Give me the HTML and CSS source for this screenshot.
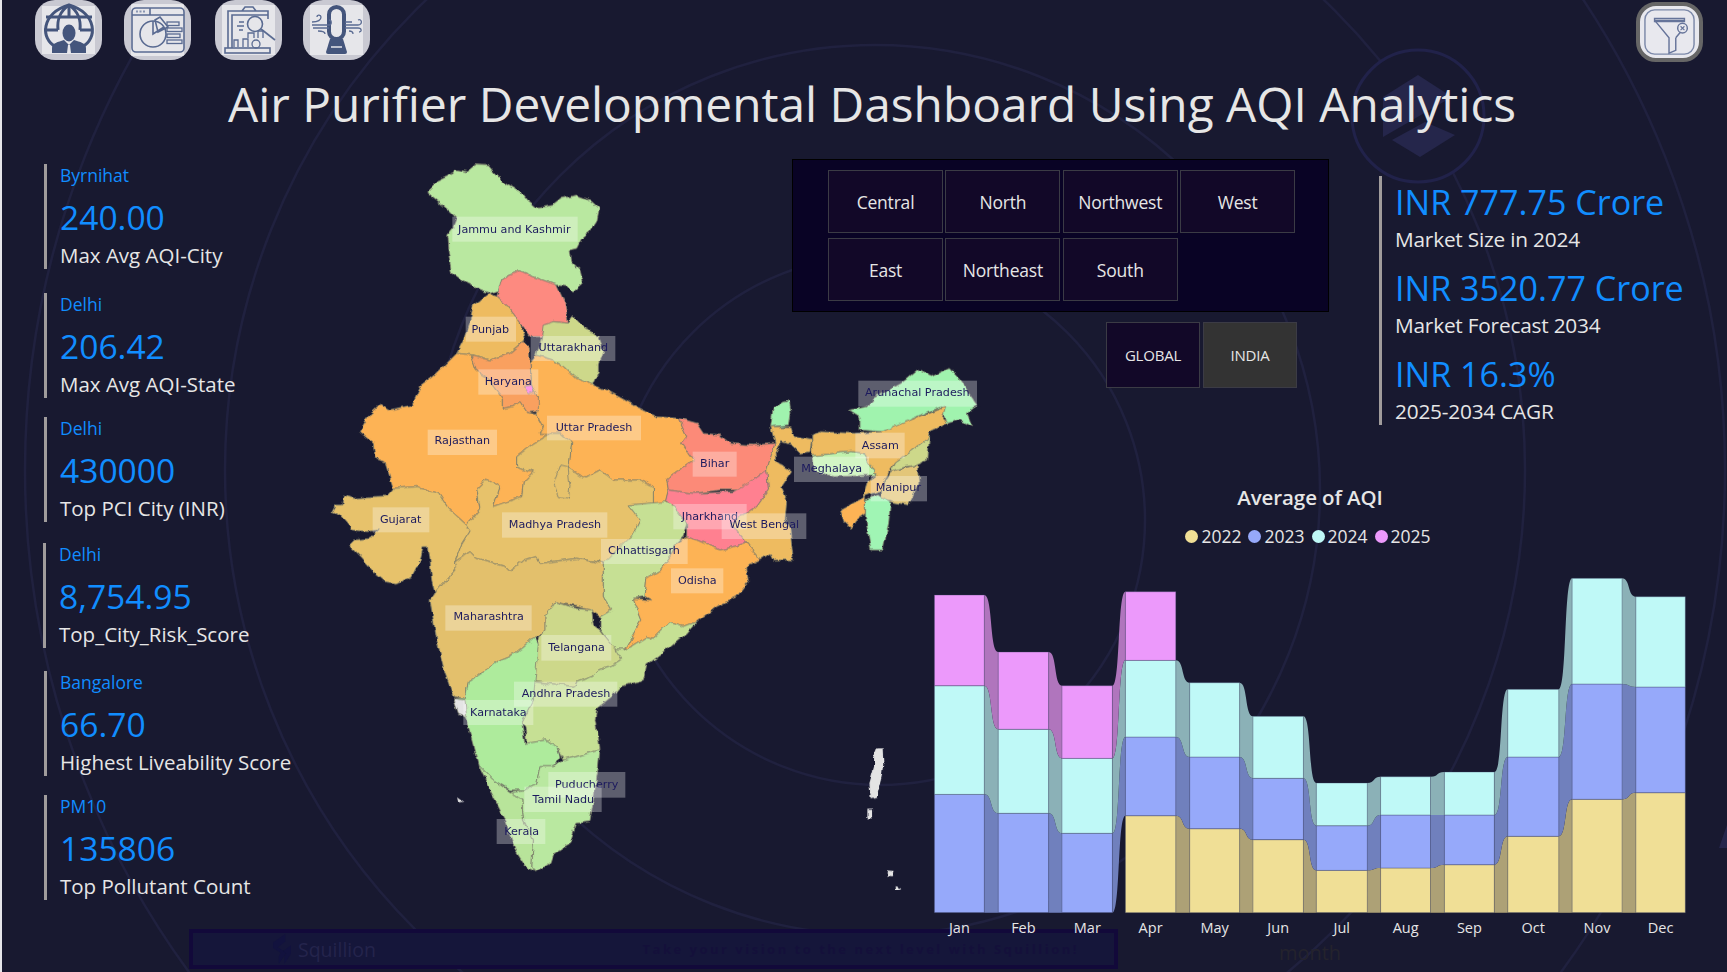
FILE: index.html
```html
<!DOCTYPE html>
<html lang="en">
<head>
<meta charset="utf-8">
<title>Air Purifier Developmental Dashboard</title>
<link rel="stylesheet" href="styles.css">
</head>
<body>
<div class="page">
  <svg class="bg" viewBox="0 0 1727 972" aria-hidden="true">
    <circle class="ring" cx="880" cy="520" r="265"/>
    <circle class="ring" cx="875" cy="490" r="445"/>
    <circle class="ring" cx="875" cy="470" r="650"/>
    <circle class="ring" cx="875" cy="470" r="850"/>
    <circle class="wm-back" cx="1418" cy="116" r="66"/>
    <polygon class="wm" points="1418,75 1452,97 1383,137 1383,97"/>
    <polygon class="wm" points="1392,140 1425,122 1455,135 1420,157"/>
    <polygon class="wm" points="1719,848 1727,825 1727,848"/>
  </svg>

  <footer class="banner">
    <svg class="b-logo" viewBox="0 0 20 32"><path d="M13 0v8L5 14l9 6-8 12v-8l2-4-8-5V9z"/><path d="M19 12v9l-7 11v-8l2-3-3-3z"/></svg>
    <span class="b-name">Squillion</span>
    <span class="b-tag">Take your vision to the next level with Squillion!</span>
  </footer>

  <header class="topbar">
    <nav class="nav">
      <a class="tile">
        <svg viewBox="0 0 67 60"><rect class="i-in" x="7" y="6" width="53" height="48"/>
          <g class="i-s"><path d="M21 47C5 39 6 13 34 5c28 8 29 34 13 42"/><path d="M34 5C24 12 22 20 23 30M34 5c10 7 12 15 11 25"/><path d="M11 17h46M9 30h14M45 30h13M34 5v12"/></g>
          <ellipse class="i-f" cx="34" cy="33" rx="6.5" ry="8.5"/><path class="i-f" d="M17 53v-5c0-5 6-6 12-8l5 5 5-5c6 2 12 3 12 8v5z"/><path class="i-w" d="M33 45h2l1 8h-4z"/></svg>
      </a>
      <a class="tile tile-2">
        <svg viewBox="0 0 67 60"><rect class="i-in" x="7" y="4" width="53" height="52"/>
          <g class="i-s2"><rect x="8" y="8" width="52" height="44" rx="4"/><path d="M8 15h52M26 8v7"/><circle cx="29" cy="34" r="13"/><path d="M29 21v13l11-7M31 20l5-3 8 10-10 5z"/></g>
          <g class="i-s3"><rect x="43" y="22" width="12" height="3.5"/><rect x="43" y="28" width="15" height="3.5"/><rect x="43" y="34" width="13" height="3.5"/><rect x="43" y="40" width="15" height="3.5"/></g>
          <path class="i-d" d="M12 11.5h9"/></svg>
      </a>
      <a class="tile tile-3">
        <svg viewBox="0 0 67 60"><rect class="i-in" x="7" y="5" width="53" height="50"/>
          <g class="i-s2"><path d="M13 48V11h40v8M17 48V15h36M27 11l3-4h8l3 4"/><rect x="10" y="48" width="45" height="5"/><circle cx="40" cy="24" r="7.5"/><path d="M46 29l14 11"/></g>
          <g class="i-s3"><path d="M24 22h5M22 26h7M24 30h4M33 38v-5h6v5M43 38v-7h5v7M28 47v-8h5v8M19 47v-7h4v7"/><circle cx="41" cy="44" r="4"/></g></svg>
      </a>
      <a class="tile tile-4">
        <svg viewBox="0 0 67 60"><rect class="i-in" x="7" y="5" width="53" height="50"/>
          <rect class="i-thick" x="26" y="7" width="15" height="32" rx="7.5"/>
          <path class="i-f" d="M27 39h13l4 13q0 2-2 2H25q-2 0-2-2z"/><path class="i-w2" d="M28 47h11"/>
          <g class="i-s3"><path d="M9 25h17c3 0 3-5 0-5M9 22c6 0 9-2 9-5 0-2-4-3-4 0M10 28h16M15 31c4 0 7 1 7 3"/><path d="M42 25h13c5 0 4-7 0-5M42 22h7M42 28h13c4 0 4 4 1 4M46 31c3 0 4 1 4 3"/></g></svg>
      </a>
    </nav>
    <a class="tile filter">
      <svg viewBox="0 0 61 54"><rect class="f-in" x="5" y="4" width="51" height="46" rx="10"/>
        <g class="f-s"><path d="M15 15h31M16 16l14 17v16l7-3V33"/><path d="M15 13h31v3H15zM37 33l5-6"/><circle cx="44" cy="23" r="5"/><path class="f-x" d="M42 21l4 4m0-4l-4 4"/></g></svg>
    </a>
  </header>

  <h1 class="title">Air Purifier Developmental Dashboard Using AQI Analytics</h1>

  <main class="main">
    <section class="kpis">
      <article class="kpi"><div class="kpi-label">Byrnihat</div><div class="kpi-value">240.00</div><div class="kpi-cap">Max Avg AQI-City</div></article>
      <article class="kpi"><div class="kpi-label">Delhi</div><div class="kpi-value">206.42</div><div class="kpi-cap">Max Avg AQI-State</div></article>
      <article class="kpi"><div class="kpi-label">Delhi</div><div class="kpi-value">430000</div><div class="kpi-cap">Top PCI City (INR)</div></article>
      <article class="kpi kpi-shift"><div class="kpi-label">Delhi</div><div class="kpi-value">8,754.95</div><div class="kpi-cap">Top_City_Risk_Score</div></article>
      <article class="kpi"><div class="kpi-label">Bangalore</div><div class="kpi-value">66.70</div><div class="kpi-cap">Highest Liveability Score</div></article>
      <article class="kpi"><div class="kpi-label">PM10</div><div class="kpi-value">135806</div><div class="kpi-cap">Top Pollutant Count</div></article>
    </section>

    <div class="right">
      <div class="top-row">
        <div class="slicers">
          <div class="regions">
            <button class="btn">Central</button><button class="btn">North</button><button class="btn">Northwest</button><button class="btn">West</button>
            <button class="btn">East</button><button class="btn">Northeast</button><button class="btn">South</button>
          </div>
          <div class="toggle">
            <button class="btn btn-sm">GLOBAL</button><button class="btn btn-sm btn-on">INDIA</button>
          </div>
        </div>
        <section class="market">
          <div class="m-value">INR 777.75 Crore</div><div class="m-cap">Market Size in 2024</div>
          <div class="m-value">INR 3520.77 Crore</div><div class="m-cap">Market Forecast 2034</div>
          <div class="m-value">INR 16.3%</div><div class="m-cap">2025-2034 CAGR</div>
        </section>
      </div>

      <figure class="chart">
        <figcaption class="chart-title">Average of AQI</figcaption>
        <ul class="legend">
          <li><i class="dot d22"></i>2022</li><li><i class="dot d23"></i>2023</li><li><i class="dot d24"></i>2024</li><li><i class="dot d25"></i>2025</li>
        </ul>
        <svg id="aqi-chart" class="plot" width="770" height="421" viewBox="0 0 770 421"></svg>
      </figure>
    </div>
  </main>

  <svg class="map" viewBox="0 0 2010 2220" role="img" aria-label="Map of India by state">
    <defs>
      <filter id="rough" filterUnits="userSpaceOnUse" x="0" y="0" width="2010" height="2220" color-interpolation-filters="sRGB">
        <feTurbulence type="fractalNoise" baseFrequency="0.035" numOctaves="3" seed="4" result="n"/>
        <feDisplacementMap in="SourceGraphic" in2="n" scale="16" xChannelSelector="R" yChannelSelector="G"/>
        <feGaussianBlur stdDeviation="1.2"/>
      </filter>
    </defs>
    <g class="states" filter="url(#rough)">
      <path class="c-green" d="M320,125 L350,95 L400,70 L405,58 L440,65 L465,45 L505,47 L525,70 L555,100 L605,130 L620,150 L650,175 L700,165 L725,145 L770,135 L810,150 L838,175 L830,215 L810,245 L785,265 L770,295 L750,300 L755,335 L780,360 L790,400 L760,425 L745,410 L710,405 L640,380 L600,362 L545,385 L540,420 L510,430 L470,415 L430,395 L395,370 L385,310 L380,255 L400,230 L410,205 L385,180 L350,150 Z"/>
      <path class="c-amber" d="M510,430 L530,440 L565,470 L600,520 L615,570 L570,610 L510,630 L460,615 L410,610 L430,570 L450,510 L460,465 Z"/>
      <path class="c-orange" d="M410,610 L340,680 L300,710 L275,765 L205,780 L180,762 L150,790 L118,845 L160,880 L165,925 L195,935 L220,1015 L290,1010 L355,1030 L385,1075 L440,1125 L480,1075 L470,1015 L500,985 L540,1010 L520,1070 L605,1040 L610,995 L640,965 L590,950 L590,920 L640,880 L690,850 L660,850 L670,835 L645,790 L620,785 L600,755 L575,770 L550,775 L550,745 L515,700 L465,660 L455,630 L460,615 Z"/>
      <path class="c-orange" d="M650,615 L700,630 L730,650 L770,685 L820,705 L860,720 L950,770 L1010,800 L1075,805 L1100,860 L1085,880 L1120,930 L1040,985 L1045,1020 L1035,1060 L1000,1060 L1000,1010 L960,990 L880,990 L840,960 L790,985 L740,950 L720,945 L700,1000 L715,1040 L745,1045 L750,1010 L745,960 L755,880 L720,850 L690,850 L660,850 L670,835 L645,790 L655,740 L635,710 L630,640 Z"/>
      <path class="c-sand" d="M440,1125 L480,1075 L470,1015 L500,985 L540,1010 L520,1070 L605,1040 L610,995 L640,965 L590,950 L590,920 L640,880 L690,850 L720,850 L755,880 L745,960 L750,1010 L745,1045 L715,1040 L700,1000 L720,945 L740,950 L790,985 L840,960 L880,990 L960,990 L1000,1010 L1000,1060 L925,1065 L960,1110 L940,1150 L860,1240 L770,1225 L660,1240 L650,1220 L610,1230 L570,1265 L550,1245 L470,1225 L450,1205 L405,1235 L425,1180 L450,1140 Z"/>
      <path class="c-sand" d="M70,1035 L100,1045 L150,1040 L200,1038 L220,1015 L290,1010 L355,1030 L385,1075 L440,1125 L450,1140 L425,1180 L405,1235 L410,1250 L390,1275 L370,1300 L345,1330 L335,1290 L330,1230 L325,1190 L310,1190 L300,1230 L275,1280 L230,1300 L195,1295 L160,1265 L125,1225 L85,1185 L100,1170 L150,1165 L175,1140 L140,1145 L100,1140 L60,1095 L35,1085 L45,1065 L65,1065 Z"/>
      <path class="c-sand2" d="M345,1330 L370,1300 L390,1275 L410,1250 L405,1235 L450,1205 L470,1225 L550,1245 L570,1265 L610,1230 L650,1220 L660,1240 L770,1225 L850,1240 L850,1340 L875,1380 L840,1400 L810,1380 L770,1370 L705,1355 L675,1395 L675,1440 L655,1460 L645,1460 L585,1510 L535,1530 L500,1560 L445,1595 L435,1645 L400,1640 L375,1570 L350,1470 L330,1350 Z"/>
      <path class="c-red" d="M545,385 L600,362 L640,380 L710,405 L735,460 L745,520 L700,515 L670,540 L665,560 L630,560 L600,520 L565,470 L530,440 Z"/>
      <path class="c-olive" d="M665,560 L670,525 L700,515 L745,520 L760,500 L790,530 L835,560 L850,600 L835,640 L835,670 L820,705 L770,685 L730,650 L700,630 L650,615 Z"/>
      <path class="c-dorange" d="M460,615 L510,630 L570,610 L612,575 L628,590 L630,640 L635,710 L655,740 L655,780 L620,785 L600,755 L575,770 L550,775 L550,745 L515,700 L465,660 L455,630 Z"/>
      <path class="c-pink" d="M610,710 L635,705 L642,725 L625,732 Z"/>
      <path class="c-salmon" d="M1075,805 L1130,820 L1150,850 L1200,855 L1230,880 L1300,885 L1365,880 L1340,960 L1300,990 L1280,1020 L1200,1020 L1120,1030 L1045,1020 L1040,985 L1120,930 L1085,880 L1100,860 Z"/>
      <path class="c-amber" d="M1352,830 L1410,830 L1420,860 L1475,870 L1470,905 L1440,910 L1415,885 L1385,875 L1368,905 L1370,935 L1415,965 L1385,1010 L1400,1050 L1395,1110 L1410,1140 L1420,1230 L1360,1230 L1350,1210 L1320,1230 L1280,1180 L1230,1120 L1280,1090 L1310,1070 L1345,1020 L1340,960 L1365,880 Z"/>
      <path class="c-rose" d="M1045,1020 L1120,1030 L1240,1025 L1300,990 L1340,960 L1345,1020 L1310,1070 L1280,1090 L1230,1120 L1280,1180 L1200,1200 L1130,1170 L1100,1160 L1100,1120 L1060,1070 L1035,1060 Z"/>
      <path class="c-mint" d="M1360,770 L1405,755 L1410,790 L1405,825 L1352,830 Z"/>
      <g transform="translate(300,1050)">
        <path class="c-lime" d="M625,15 L740,5 L760,20 L800,70 L790,110 L770,130 L750,170 L720,210 L680,235 L675,290 L640,295 L665,360 L615,450 L585,450 L540,385 L540,350 L575,330 L550,290 L550,190 L640,100 L660,60 Z"/>
        <path class="c-orange" d="M800,110 L830,120 L900,150 L980,130 L1020,180 L980,200 L985,245 L950,290 L890,320 L830,365 L790,380 L750,365 L700,415 L680,410 L615,450 L665,360 L640,295 L695,300 L675,290 L680,235 L720,210 L750,170 L770,130 Z"/>
        <path class="c-olive" d="M405,305 L470,325 L515,330 L520,375 L540,390 L585,445 L605,480 L590,490 L535,510 L520,525 L470,545 L465,560 L340,545 L345,480 L355,415 L375,390 L375,345 Z"/>
        <path class="c-lime" d="M585,450 L615,450 L680,410 L700,415 L750,365 L790,380 L830,365 L800,400 L740,450 L680,495 L670,540 L600,560 L575,590 L530,625 L525,660 L535,710 L540,750 L500,760 L430,780 L410,740 L380,720 L320,730 L315,680 L305,670 L340,600 L340,545 L465,560 L470,545 L520,525 L535,510 L590,490 L605,480 Z"/>
        <path class="c-kar" d="M345,410 L355,430 L345,545 L340,600 L305,670 L315,730 L380,720 L410,740 L420,770 L400,800 L360,800 L350,850 L310,870 L270,870 L220,840 L175,795 L150,700 L135,650 L100,595 L135,595 L145,545 L200,510 L235,480 L285,460 Z"/>
        <path class="c-green" d="M540,750 L535,800 L510,965 L470,970 L450,1030 L400,1060 L390,1090 L350,1115 L335,1100 L340,1020 L310,960 L305,900 L270,875 L310,870 L350,850 L360,800 L400,800 L430,780 L500,760 Z"/>
        <path class="c-green2" d="M175,795 L220,840 L270,875 L305,900 L310,960 L340,1020 L335,1100 L350,1115 L320,1105 L285,1050 L250,950 L210,870 Z"/>
        <path class="c-goa" d="M100,595 L135,600 L140,650 L115,640 Z"/>
        <path class="c-isl" d="M1372,745 L1388,745 L1390,790 L1385,830 L1370,890 L1352,895 L1348,850 L1362,800 L1362,770 Z"/>
        <path class="c-isl" d="M1342,926 L1356,926 L1356,952 L1342,952 Z"/>
        <path class="c-isl" d="M114,892 L130,904 L118,908 Z"/>
        <path class="c-isl" d="M1404,1108 L1424,1110 L1418,1132 L1402,1130 Z"/>
        <path class="c-isl" d="M1424,1158 L1442,1165 L1445,1200 L1425,1195 Z"/>
      </g>
      <g transform="translate(1320,0) scale(1.0714,1)">
        <path class="c-mint" d="M250,780 L300,770 L320,745 L395,700 L440,660 L480,680 L530,655 L560,690 L610,765 L580,790 L595,830 L560,810 L520,820 L510,770 L470,785 L420,810 L390,830 L345,845 L280,840 L280,800 Z"/>
        <path class="c-amber" d="M145,855 L170,845 L270,850 L345,845 L420,810 L520,768 L510,805 L525,820 L475,845 L470,865 L420,905 L380,935 L360,965 L340,1020 L290,1040 L305,990 L325,975 L290,910 L255,905 L145,918 Z"/>
        <path class="c-meg" d="M145,918 L255,905 L290,910 L325,975 L205,980 L150,960 Z"/>
        <path class="c-olive" d="M475,845 L470,930 L440,945 L410,950 L365,965 L380,935 L420,905 L470,865 Z"/>
        <path class="c-man" d="M365,965 L440,945 L445,1000 L415,1065 L340,1050 L340,1020 Z"/>
        <path class="c-miz" d="M295,1050 L330,1035 L365,1060 L360,1120 L345,1200 L310,1200 L295,1100 Z"/>
        <path class="c-orange" d="M225,1080 L295,1040 L295,1090 L270,1110 L255,1135 L235,1115 Z"/>
      </g>
    </g>
    <g class="labels">
      <rect x="397" y="200" width="376" height="75"/><text x="583" y="248">Jammu and Kashmir</text>
      <rect x="437" y="500" width="151" height="75"/><text x="511" y="548">Punjab</text>
      <rect x="632" y="558" width="254" height="75"/><text x="760" y="603">Uttarakhand</text>
      <rect x="475" y="658" width="180" height="76"/><text x="565" y="705">Haryana</text>
      <rect x="681" y="797" width="282" height="74"/><text x="822" y="843">Uttar Pradesh</text>
      <rect x="323" y="839" width="208" height="76"/><text x="427" y="883">Rajasthan</text>
      <rect x="1118" y="905" width="132" height="75"/><text x="1184" y="951">Bihar</text>
      <rect x="158" y="1072" width="170" height="75"/><text x="242" y="1118">Gujarat</text>
      <rect x="546" y="1087" width="316" height="76"/><text x="705" y="1135">Madhya Pradesh</text>
      <rect x="1060" y="1062" width="220" height="76"/><text x="1170" y="1110">Jharkhand</text>
      <rect x="1205" y="1090" width="254" height="77"/><text x="1333" y="1135">West Bengal</text>
      <rect x="843" y="1167" width="260" height="75"/><text x="972" y="1213">Chhattisgarh</text>
      <rect x="1053" y="1255" width="157" height="75"/><text x="1132" y="1301">Odisha</text>
      <rect x="376" y="1366" width="259" height="76"/><text x="506" y="1411">Maharashtra</text>
      <rect x="664" y="1455" width="210" height="77"/><text x="770" y="1504">Telangana</text>
      <rect x="582" y="1595" width="310" height="75"/><text x="738" y="1641">Andhra Pradesh</text>
      <rect x="430" y="1650" width="210" height="75"/><text x="535" y="1698">Karnataka</text>
      <rect x="685" y="1866" width="231" height="77"/><text x="800" y="1913">Puducherry</text>
      <rect x="613" y="1910" width="232" height="76"/><text x="730" y="1958">Tamil Nadu</text>
      <rect x="530" y="2007" width="146" height="75"/><text x="605" y="2055">Kerala</text>
      <rect x="1615" y="692" width="356" height="78"/><text x="1792" y="738">Arunachal Pradesh</text>
      <rect x="1606" y="848" width="148" height="77"/><text x="1681" y="896">Assam</text>
      <rect x="1422" y="920" width="225" height="76"/><text x="1535" y="966">Meghalaya</text>
      <rect x="1652" y="978" width="169" height="76"/><text x="1735" y="1023">Manipur</text>
    </g>
  </svg>
</div>
<script src="chart.js"></script>
</body>
</html>
```
FILE: styles.css
```css
* { box-sizing: border-box; }
html, body { margin: 0; padding: 0; background: #181930; }
body { font-family: "Open Sans", "Noto Sans", sans-serif; }

.page {
  position: relative;
  width: 1727px;
  height: 972px;
  overflow: hidden;
  background: #181930;
  border-left: 2px solid #e6e6ea;
  color: #e6e6e6;
}

.bg { position: absolute; left: -2px; top: 0; width: 1727px; height: 972px; }
.ring { fill: none; stroke: #20213f; stroke-width: 2.5; }
.wm-back { fill: #181930; stroke: #21224a; stroke-width: 3; }
.wm { fill: #25264b; }

/* top bar */
.topbar {
  position: relative;
  display: flex;
  justify-content: space-between;
  align-items: flex-start;
  height: 62px;
  padding: 0 24px 0 33px;
}
.nav { display: flex; gap: 22px; }
.tile {
  display: block;
  width: 67px;
  height: 60px;
  border-radius: 20px;
  background: #c9c9d2;
  overflow: hidden;
}
.tile svg { display: block; width: 100%; height: 100%; }
.tile-3 { margin-left: 2px; }
.tile-4 { margin-left: -1px; }
.i-in { fill: #e6e6ea; }
.i-s { fill: none; stroke: #44557c; stroke-width: 3; }
.i-s2 { fill: none; stroke: #5a6b92; stroke-width: 1.6; }
.i-s3 { fill: none; stroke: #5a6b92; stroke-width: 1.3; }
.i-f { fill: #44557c; }
.i-w { fill: #e6e6ea; }
.i-w2 { stroke: #e6e6ea; stroke-width: 1.5; }
.i-d { stroke: #8a96b2; stroke-width: 2; stroke-dasharray: 2 1.5; }
.i-thick { fill: none; stroke: #44557c; stroke-width: 4; }

.filter {
  width: 67px;
  height: 60px;
  margin-top: 2px;
  border: 4px solid #666;
  background: #e8e8ee;
}
.f-in { fill: #e8e8ee; stroke: #7b88a8; stroke-width: 1.5; }
.f-s { fill: none; stroke: #66749a; stroke-width: 1.5; }
.f-x { stroke-width: 1.2; }

/* title */
.title {
  position: relative;
  margin: -2px 0 2px;
  height: 88px;
  padding-left: 15px;
  font-size: 47.8px;
  font-weight: 400;
  line-height: 88px;
  text-align: center;
  white-space: nowrap;
  color: #e6e6e6;
}

/* layout */
.main { position: relative; display: flex; }
.kpis {
  display: flex;
  flex-direction: column;
  width: 790px;
  padding: 14px 0 0 42px;
}
.kpi {
  height: 105px;
  padding-left: 13px;
  border-left: 3px solid #a09c9c;
  white-space: nowrap;
}
.kpi:nth-child(2) { margin-top: 24px; }
.kpi:nth-child(3) { margin-top: 19px; }
.kpi:nth-child(4) { margin-top: 21px; }
.kpi:nth-child(5) { margin-top: 23px; }
.kpi:nth-child(6) { margin-top: 19px; }
.kpi-shift { margin-left: -1px; }
.kpi-label { font-size: 17.5px; line-height: 23px; color: #118dff; }
.kpi-value { margin-top: 7px; font-size: 33.6px; line-height: 46px; color: #118dff; }
.kpi-cap { margin-top: 2px; font-size: 20.5px; line-height: 26px; color: #e6e6e6; }

.right { flex: 1; min-width: 0; }
.top-row { display: flex; height: 275px; }
.slicers { width: 587px; padding-top: 9px; }
.regions {
  display: grid;
  grid-template-columns: repeat(4, 115px);
  grid-auto-rows: 63px;
  column-gap: 2.4px;
  row-gap: 5px;
  width: 537px;
  height: 153px;
  padding: 10px 0 0 35px;
  background: #090325;
  border: 1px solid #000;
}
.btn {
  font: 400 17.5px "Open Sans", "Noto Sans", sans-serif;
  color: #e6e6e6;
  background: #120828;
  border: 1.5px solid #3b3b45;
  padding: 0;
  letter-spacing: -.2px;
}
.toggle { display: flex; gap: 3px; margin: 10px 0 0 314px; }
.btn-sm { width: 94px; height: 66px; font-size: 15px; }
.btn-on { background: #333; }

.market {
  height: 249px;
  margin-top: 26px;
  padding: 4px 0 0 13px;
  border-left: 3px solid #a09c9c;
  white-space: nowrap;
}
.m-value { font-size: 34.1px; line-height: 44px; color: #118dff; }
.m-cap { font-size: 20.8px; line-height: 31px; margin-bottom: 11px; color: #e6e6e6; letter-spacing: -.2px; }

/* chart */
.chart { width: 760px; margin: 58px 0 0 138px; }
.chart-title { font-size: 20.5px; font-weight: 600; line-height: 28px; text-align: center; color: #e6e6e6; letter-spacing: -.1px; }
.legend {
  display: flex;
  justify-content: center;
  gap: 7px;
  margin: 11px 0 1px;
  padding: 0 4px 0 0;
  list-style: none;
  font-size: 17.5px;
  line-height: 28px;
}
.legend li { display: flex; align-items: center; gap: 3px; }
.dot { display: block; width: 13px; height: 13px; border-radius: 50%; }
.d22 { background: #f0df96; }
.d23 { background: #96a9fa; }
.d24 { background: #bff9f7; }
.d25 { background: #ec99fb; }
.plot { display: block; overflow: visible; }
.plot .s0 { fill: #f0df96; } .plot .r0 { fill: #ada176; }
.plot .s1 { fill: #96a9fa; } .plot .r1 { fill: #7080bd; }
.plot .s2 { fill: #bff9f7; } .plot .r2 { fill: #8bb1b7; }
.plot .s3 { fill: #ec99fb; } .plot .r3 { fill: #b075bd; }
.plot .bar { stroke: rgba(60, 65, 100, .35); stroke-width: 1; }
.plot text { font-family: "Open Sans", "Noto Sans", sans-serif; font-size: 14.5px; fill: #e6e6e6; text-anchor: middle; }
.plot .axis-name { font-size: 20px; fill: #24232d; }

/* map */
.map { position: absolute; left: 318px; top: 150px; width: 670px; height: 740px; }
.states path { stroke: #7d7f6c; stroke-width: 2.4; stroke-linejoin: round; }
.c-green { fill: #b9e8a0; }
.c-green2 { fill: #b8e49a; }
.c-amber { fill: #eebb60; }
.c-orange { fill: #fdb355; }
.c-dorange { fill: #f9a05f; }
.c-sand { fill: #e7c26b; }
.c-sand2 { fill: #e3c06c; }
.c-red { fill: #fd8a80; }
.c-salmon { fill: #fc8a78; }
.c-rose { fill: #ff8090; }
.c-olive { fill: #cdd88a; }
.c-pink { fill: #ff6ee0; }
.c-mint { fill: #a0f3ae; }
.c-lime { fill: #c6e094; }
.c-kar { fill: #aeeb9c; }
.c-goa, .c-isl { fill: #e4e4e4; }
.c-isl { stroke: none !important; }
.c-meg { fill: #c0f2ac; }
.c-man { fill: #e3c679; }
.c-miz { fill: #a0f5b4; }
.labels rect { fill: #fff; fill-opacity: .3; }
.labels text {
  font-family: "DejaVu Sans", sans-serif;
  font-size: 33.5px;
  fill: #1c1a5e;
  text-anchor: middle;
}

/* footer banner */
.banner {
  position: absolute;
  left: 187px;
  top: 929px;
  display: flex;
  align-items: center;
  width: 929px;
  height: 40px;
  padding: 0 35px 0 80px;
  background: #15163a;
  border: 4px solid #12093a;
}
.b-logo { width: 19px; height: 30px; fill: #12123e; }
.b-name { margin-left: 6px; font-size: 19.5px; color: #24244c; }
.b-tag { margin-left: auto; font-size: 13px; font-weight: 700; letter-spacing: 2.5px; color: #14103a; }
```
FILE: chart.js
```js
// Power BI style ribbon chart: columns are stacked, ribbons link each series between months.
(function () {
  var svg = document.getElementById('aqi-chart');
  var NS = 'http://www.w3.org/2000/svg';
  var X0 = 930, Y0 = 551;
  function px(z) { return 920 + z / 1.943 - X0; }
  function py(z) { return 480 + z / 3 - Y0; }

  var BASE = 1298;
  var months = [
    ['Jan', 28, 125, [null, 943, 617, 345]],
    ['Feb', 152, 250, [null, 1000, 748, 516]],
    ['Mar', 276, 374, [null, 1060, 835, 617]],
    ['Apr', 399, 497, [1007, 771, 541, 335]],
    ['May', 524, 621, [1046, 831, 608, null]],
    ['Jun', 647, 745, [1079, 895, 709, null]],
    ['Jul', 770, 869, [1171, 1037, 909, null]],
    ['Aug', 895, 992, [1164, 1005, 890, null]],
    ['Sep', 1019, 1116, [1154, 1005, 876, null]],
    ['Oct', 1142, 1241, [1069, 831, 628, null]],
    ['Nov', 1267, 1364, [958, 612, 295, null]],
    ['Dec', 1391, 1487, [938, 621, 350, null]]
  ];

  function add(tag, attrs, text) {
    var el = document.createElementNS(NS, tag);
    for (var k in attrs) el.setAttribute(k, attrs[k]);
    if (text) el.textContent = text;
    svg.appendChild(el);
  }
  function bottom(tops, s) {
    for (var i = s - 1; i >= 0; i--) if (tops[i] !== null) return tops[i];
    return BASE;
  }
  function f(n) { return n.toFixed(1); }

  months.forEach(function (m, i) {
    var next = months[i + 1];
    if (!next) return;
    var x1 = px(m[2]), x2 = px(next[1]), mid1 = x1 + (x2 - x1) * 0.62, mid2 = x1 + (x2 - x1) * 0.38;
    for (var s = 0; s < 4; s++) {
      if (m[3][s] === null || next[3][s] === null) continue;
      var t1 = py(m[3][s]), t2 = py(next[3][s]);
      var b1 = py(bottom(m[3], s)), b2 = py(bottom(next[3], s));
      var d = 'M' + f(x1) + ',' + f(t1) +
        ' C' + f(mid1) + ',' + f(t1) + ' ' + f(mid2) + ',' + f(t2) + ' ' + f(x2) + ',' + f(t2) +
        ' L' + f(x2) + ',' + f(b2) +
        ' C' + f(mid2) + ',' + f(b2) + ' ' + f(mid1) + ',' + f(b1) + ' ' + f(x1) + ',' + f(b1) + ' Z';
      add('path', { 'class': 'r' + s, d: d });
    }
  });

  months.forEach(function (m) {
    var x = px(m[1]), w = px(m[2]) - x;
    for (var s = 0; s < 4; s++) {
      if (m[3][s] === null) continue;
      var t = py(m[3][s]), b = py(bottom(m[3], s));
      add('rect', { 'class': 'bar s' + s, x: f(x), y: f(t), width: f(w), height: f(b - t) });
    }
    add('text', { x: f(x + w / 2), y: 382 }, m[0]);
  });
  add('text', { 'class': 'axis-name', x: 380, y: 409 }, 'month');
})();
```
